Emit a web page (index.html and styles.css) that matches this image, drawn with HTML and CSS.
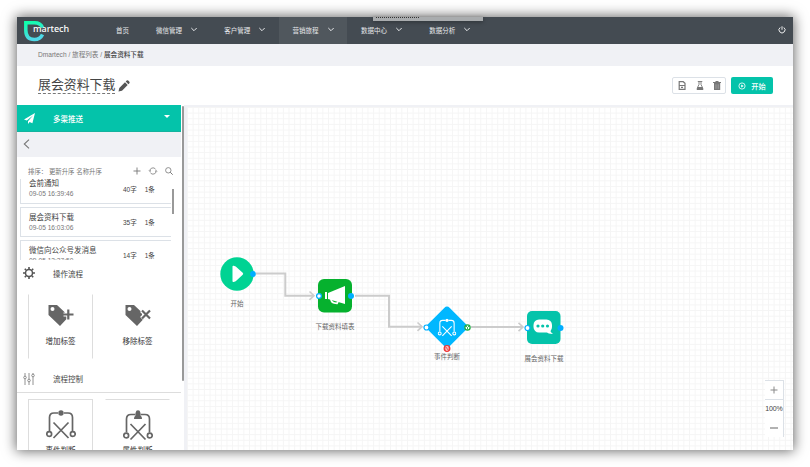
FILE: index.html
```html
<!DOCTYPE html>
<html lang="zh-CN">
<head>
<meta charset="utf-8">
<title>Dmartech</title>
<link rel="stylesheet" href="styles.css">
</head>
<body>
<svg class="defs" width="0" height="0">
  <symbol id="chev" viewBox="0 0 6 5"><path d="M.3 1 3 3.700 5.700 1" fill="none" stroke="currentColor" stroke-width="1"/></symbol>
  <symbol id="journey" viewBox="0 0 30 29"><g fill="none" stroke="currentColor" stroke-width="1.700"><path d="M3.500 21V7.500q0-4.500 4.500-4.500h4M18 3h4q4.500 0 4.500 4.500V21M7.500 12.500l15 15.500M22.500 12.500 7.500 28"/><circle cx="3.200" cy="24" r="2.400"/><circle cx="26.800" cy="24" r="2.400"/></g><circle cx="15" cy="3" r="2.700" fill="currentColor"/></symbol>
  <symbol id="tag" viewBox="0 0 26 22"><path fill="currentColor" d="M.5 0H9l8 7.500v3h2v3L12 21 .5 10z"/><circle cx="4.500" cy="4" r="2" fill="#fff"/></symbol>
</svg>
<div class="window">
  <header class="nav">
    <svg class="logo" viewBox="0 0 22 22"><defs><linearGradient id="lg" x1="0" y1="0" x2="0.300" y2="1"><stop offset="0" stop-color="#0fffab"/><stop offset="1" stop-color="#4fd8e8"/></linearGradient></defs><path d="M18.500 7.500Q16.500 2.700 10.500 2.700H1.800V10q0 9.500 8.500 9.500 6 0 8.200-5" fill="none" stroke="url(#lg)" stroke-width="3.500"/></svg>
    <span class="brand">martech</span>
    <nav class="menu">
      <a class="home">首页</a>
      <a>微信管理<svg><use href="#chev"/></svg></a>
      <a>客户管理<svg><use href="#chev"/></svg></a>
      <a class="active">营销旅程<svg><use href="#chev"/></svg></a>
      <a>数据中心<svg><use href="#chev"/></svg></a>
      <a>数据分析<svg><use href="#chev"/></svg></a>
    </nav>
    <svg class="power" viewBox="0 0 8 8"><path d="M2.200 1.500a3 3 0 1 0 3.600 0M4 .3v3.500" fill="none" stroke="#fff" stroke-width=".9"/></svg>
    <div class="tip"><i></i></div>
  </header>
  <div class="crumbs">Dmartech / 旅程列表 / <b>展会资料下载</b></div>
  <section class="titlebar">
    <h1>展会资料下载</h1>
    <svg class="pencil" viewBox="0 0 12 12"><path fill="#555" d="M.5 11.500 1.300 8 7 2.300 9.700 5 4 10.700zM7.700 1.600l1-1q.8-.6 1.500 0L11.400 1.800q.6.800 0 1.500l-1 1z"/></svg>
    <div class="tools">
      <svg viewBox="0 0 8 9"><path d="M1.200.7h4L7 2.300v6H1.200zM1.200 4.500H7M3 6.300h2" fill="none" stroke="#777" stroke-width="1.200"/></svg>
      <svg viewBox="0 0 8 9"><path d="M1.800.5h4.500M3 .5v3L1 7.500h6L5 3.500v-3" fill="none" stroke="#777" stroke-width=".9"/><path d="M2 6h4l1.500 3h-7z" fill="#777"/></svg>
      <svg viewBox="0 0 8 9"><path d="M0 1.500h8M2.500.5h3" stroke="#777" stroke-width="1.200"/><path d="M1 2h6.200v7H1z" fill="#777"/><path d="M3 3.300v4.500M5.200 3.300v4.500" stroke="#bbb" stroke-width=".6"/></svg>
    </div>
    <button class="start"><svg viewBox="0 0 8 8"><circle cx="4" cy="4" r="3.100" fill="none" stroke="#fff" stroke-width=".8"/><path d="M3.200 2.500 5.700 4 3.200 5.500z" fill="#fff"/></svg>开始</button>
  </section>
  <main class="work">
    <aside class="side">
      <div class="push"><svg viewBox="0 0 11 11"><path fill="#fff" d="M11 0 0 6.500l2.800 1L9 2.500 4 8.300V11l1.600-2 2.800 1.200z"/></svg><span>多渠推送</span><i class="caret"></i></div>
      <div class="back"><svg viewBox="0 0 7 10"><path d="M6 .7 1.300 5 6 9.300" fill="none" stroke="#777" stroke-width="1.100"/></svg></div>
      <div class="sort"><span>排序： 更新升序 名称升序</span>
        <svg class="s1" viewBox="0 0 8 8"><path d="M4 .5v7M.5 4h7" stroke="#777" stroke-width=".9"/></svg>
        <svg class="s2" viewBox="0 0 8 8"><path d="M.8 4.300A3.200 3.200 0 0 1 6.600 2.200M7.200 3.700A3.200 3.200 0 0 1 1.400 5.800M0 3.500l.9 1 1-.9M6.200 4.400l1-.9.800 1" fill="none" stroke="#777" stroke-width=".8"/></svg>
        <svg class="s3" viewBox="0 0 8 8"><circle cx="3.300" cy="3.300" r="2.700" fill="none" stroke="#777" stroke-width=".8"/><path d="m5.200 5.200 2.500 2.500" stroke="#777"/></svg>
      </div>
      <div class="list">
        <div class="item first"><div><b>会前通知</b><small>09-05 16:39:46</small></div><span>40字</span><span class="n">1条</span></div>
        <div class="item"><div><b>展会资料下载</b><small>09-05 16:03:06</small></div><span>35字</span><span class="n">1条</span></div>
        <div class="item last"><div><b>微信向公众号发消息</b><small>09-05 13:27:50</small></div><span>14字</span><span class="n">1条</span></div>
        <i class="thumb"></i>
      </div>
      <div class="head ops"><svg viewBox="0 0 12 12"><circle cx="6" cy="6" r="3.500" fill="none" stroke="#555" stroke-width="1.500"/><path d="M6 0v2M6 10v2M0 6h2M10 6h2M1.800 1.800l1.300 1.300M8.900 8.900l1.300 1.300M1.800 10.200l1.300-1.300M8.900 3.100l1.300-1.300" stroke="#555" stroke-width="1.600"/></svg><span>操作流程</span></div>
      <div class="cards tags">
        <div class="card sides"><svg viewBox="0 0 26 22"><use href="#tag" width="26" height="22"/><path d="M20.300 4.500v10M15.500 9.500h10" stroke="#fff" stroke-width="4"/><path d="M20.300 4.500v10M15 9.500h10.500" stroke="#666" stroke-width="2.200"/></svg><span>增加标签</span></div>
        <div class="card"><svg viewBox="0 0 26 22"><use href="#tag" width="26" height="22"/><path d="m16.500 5.500 8 8M24.500 5.500l-8 8" stroke="#fff" stroke-width="4"/><path d="m17 5.500 8 8M25 5.500l-8 8" stroke="#666" stroke-width="2.200"/></svg><span>移除标签</span></div>
      </div>
      <div class="head ctl"><svg viewBox="0 0 12 12"><path d="M2 0v3M2 6v6M6 0v6M6 9v3M10 0v1M10 4v8" stroke="#777" stroke-width=".8"/><g fill="none" stroke="#777" stroke-width=".8"><circle cx="2" cy="4.500" r="1.300"/><circle cx="6" cy="7.500" r="1.300"/><circle cx="10" cy="2.500" r="1.300"/></g></svg><span>流程控制</span></div>
      <div class="cards flow">
        <div class="card full"><svg class="j" viewBox="0 0 30 29"><use href="#journey" width="30" height="29"/></svg><span>事件判断</span></div>
        <div class="card top"><svg class="j" viewBox="0 0 30 29"><use href="#journey" y="1.500" width="30" height="29"/><circle cx="15" cy="2.500" r="2.200" fill="#666"/><path d="M11 9q0-4 4-4t4 4z" fill="#666"/></svg><span>属性判断</span></div>
      </div>
    </aside>
    <div class="gutter"><i></i></div>
    <div class="canvas">
      <svg class="wires" width="606" height="343" viewBox="187 107 606 343"><g fill="none" stroke="#ccc" stroke-width="2"><path d="M256 273.500h29.300v22.200H314M355 295.700h34v31H422M471 327h51"/><path d="m309.500 291.500 4.500 4.200-4.500 4.200M417.500 322.500l4.500 4.200-4.500 4.200M518.500 322.800l4.500 4.200-4.500 4.200" stroke-width="1.600"/></g></svg>
      <div class="node begin"><svg viewBox="0 0 34 34"><circle cx="17" cy="17" r="16.700" fill="#00d393"/><path d="M12.500 9.500q0-1 1.200-.8l2 .8 7 6.300q1 1 0 2l-7 6.400-2 .8q-1.200.2-1.200-.8z" fill="#fff"/><circle cx="33" cy="17" r="2.900" fill="#00aeff"/></svg><span>开始</span></div>
      <div class="node form"><svg viewBox="0 0 34 34"><rect width="34" height="33.500" rx="6" fill="#06b12e"/><path fill="#fff" d="M7 13h2v7H7zM10 14l17-7v18l-17-5z"/><path d="M13 20q0 4.300 6 4.300l1-2" fill="none" stroke="#fff" stroke-width="1.800"/><circle cx="1" cy="17" r="2.400" fill="#fff" stroke="#00aeff" stroke-width="1.300"/><circle cx="33" cy="17" r="3" fill="#00aeff"/></svg><span>下载资料填表</span></div>
      <div class="node judge"><svg viewBox="0 0 42 42"><rect x="5.500" y="5.500" width="31" height="31" rx="4" transform="rotate(45 21 21)" fill="#00b7ff"/><g color="#fff"><use href="#journey" x="11.500" y="12.500" width="19" height="18"/></g><circle cx="0.500" cy="21.500" r="2.500" fill="#fff" stroke="#00aeff" stroke-width="1.200"/><circle cx="41.500" cy="21.500" r="2.600" fill="#fff" stroke="#1aac43" stroke-width="1.300"/><path d="m40 20 1.500 1.500L43 20M41.500 21.500v2" fill="none" stroke="#1aac43" stroke-width=".9"/><circle cx="21" cy="42.500" r="2.800" fill="#fff" stroke="#e33" stroke-width="1.300"/><path d="M19.900 44v-3l2.200 3v-3" fill="none" stroke="#e33" stroke-width=".8"/></svg><span>事件判断</span></div>
      <div class="node msg"><svg viewBox="0 0 34 34"><rect width="33.500" height="33" rx="5" fill="#04c3aa"/><rect x="6.500" y="8.500" width="18.500" height="13" rx="5.500" fill="#fff"/><path d="M19 20.500q2 2.500 7 2.500-3-2-3-5z" fill="#fff"/><g fill="#04c3aa"><circle cx="11" cy="15" r="1.600"/><circle cx="15.700" cy="15" r="1.600"/><circle cx="20.500" cy="15" r="1.600"/></g><circle cx=".5" cy="17" r="2.500" fill="#fff" stroke="#00aeff" stroke-width="1.200"/><circle cx="33.500" cy="17" r="3" fill="#00aeff"/></svg><span>展会资料下载</span></div>
      <div class="zoom"><div class="plus"><svg viewBox="0 0 8 8"><path d="M4 .5v7M.5 4h7" stroke="#888"/></svg></div><span>100%</span><div><svg viewBox="0 0 8 8"><path d="M0 4h8" stroke="#888" stroke-width="1.300"/></svg></div></div>
    </div>
  </main>
</div>
</body>
</html>
```
FILE: styles.css
```css
* { box-sizing: border-box; }
body { margin: 0; width: 810px; height: 467px; padding: 17px; overflow: hidden; background: #fff; color: #444; font-family: "Liberation Sans", "Noto Sans CJK SC", sans-serif; font-size: 7px; }
svg { display: block; flex: none; overflow: visible; }
.defs { position: absolute; }
.window { width: 776px; height: 433px; background: #fff; box-shadow: 0 0 12px 1px rgba(0,0,0,.6); clip-path: inset(-17px); display: flex; flex-direction: column; }
.nav { height: 27px; flex: none; background: #444b52; display: flex; align-items: center; position: relative; color: #fff; }
.logo { width: 22px; height: 22px; margin-left: 7px; }
.brand { font: 500 9px/12px "Noto Sans", sans-serif; margin: -3px 0 0 -13px; width: 47px; position: relative; }
.menu { display: flex; height: 27px; margin-left: 22px; }
.menu a { width: 68.3px; padding-left: 14px; display: flex; align-items: center; font-size: 6.5px; padding-bottom: 2px; color: #e6e8ea; white-space: nowrap; }
.menu .home { width: 40px; }
.menu svg { width: 6px; height: 5px; margin-left: 9px; }
.menu .active { background: #50575d; }
.power { width: 8px; height: 8px; margin: -2px 7px 0 auto; }
.tip { position: absolute; left: 356px; top: 0; width: 110px; height: 4px; background: #a9acae; box-shadow: 0 1px 4px rgba(0,0,0,.35); }
.tip i { display: block; width: 43px; margin-left: 3px; border-top: 1px dotted #333; }
.crumbs { height: 22px; flex: none; background: #f0f1f5; padding-left: 21px; line-height: 21px; font-size: 6.6px; color: #777; }
.crumbs b { color: #444; font-weight: 500; }
.titlebar { height: 39px; flex: none; display: flex; align-items: center; padding: 0 20px 0 21px; }
h1 { margin: -2px 0 0; font-size: 12.9px; font-weight: 400; line-height: 17px; border-bottom: 1px dashed #777; width: 77px; white-space: nowrap; height: 18px; }
.pencil { width: 12px; height: 12px; margin-left: 3px; }
.tools { margin-left: auto; width: 54px; height: 17px; border: 1px solid #dce1e7; border-radius: 2px; display: flex; align-items: center; justify-content: space-between; padding: 0 4px 0 5px; }
.tools svg { width: 8px; height: 9px; }
.start { width: 42px; height: 17px; margin: 0 0 0 5px; border: 0; border-radius: 2px; background: #04c3aa; color: #fff; display: flex; align-items: center; justify-content: center; gap: 5px; font: 500 7.2px "Noto Sans CJK SC", sans-serif; padding: 0; }
.start svg { width: 8px; height: 8px; }
.work { display: flex; height: 345px; overflow: hidden; }
.side { width: 164px; height: 345px; overflow: hidden; flex: none; }
.push { height: 27px; background: #04c3aa; color: #fff; display: flex; align-items: center; padding: 0 11px 0 7px; font-size: 7.5px; font-weight: 500; border-bottom: 1px solid #14b39e; }
.push svg { width: 11px; height: 11px; }
.push span { margin-left: 18px; flex: 1; }
.caret { border: 3px solid transparent; border-top: 3px solid #fff; border-bottom: 0; margin-top: -3px; }
.back { height: 25px; background: #f0f1f5; padding: 7px 0 0 6px; }
.back svg { width: 7px; height: 10px; }
.sort { height: 22px; display: flex; align-items: center; font-size: 6.4px; color: #777; padding: 6px 8px 0 11px; }
.sort span { width: 105px; white-space: nowrap; }
.sort svg { width: 8px; height: 8px; }
.sort .s2, .sort .s3 { margin-left: 8px; }
.list { height: 81px; overflow: hidden; position: relative; padding-left: 3px; }
.item { height: 30px; width: 151px; border: 1px solid #dce1e7; border-right: 0; margin-bottom: 3px; display: flex; align-items: center; padding-left: 8px; font-size: 6.5px; }
.item div { width: 94px; }
.item b { display: block; font-weight: 400; font-size: 7.5px; line-height: 11px; white-space: nowrap; }
.item small { display: block; font-size: 6.6px; line-height: 10px; color: #777; }
.item .n { margin-left: 8px; }
.item.first { margin-top: -5px; border-top: 0; }
.thumb { position: absolute; left: 155px; top: 10px; width: 2px; height: 25px; background: #999; }
.head { display: flex; align-items: center; padding-left: 6px; font-size: 7.5px; }
.head svg { width: 12px; height: 12px; }
.head span { margin-left: 18px; }
.ops { height: 26px; }
.ctl { height: 28px; border-bottom: 1px solid #ddd; }
.cards { display: flex; gap: 12px; padding-left: 11px; color: #666; }
.tags { padding-top: 8px; height: 79px; }
.card { width: 65px; height: 65px; display: flex; flex-direction: column; align-items: center; padding-top: 10px; border: 1px solid transparent; }
.card svg { width: 26px; height: 22px; }
.card span { font-size: 7.5px; margin-top: 9px; line-height: 11px; color: #333; }
.sides { border-left-color: #ddd; border-right-color: #ddd; }
.flow { padding-top: 6px; }
.full { border-color: #ddd; }
.top { border-top-color: #ddd; }
.flow .card { padding-top: 10px; height: 80px; }
.card .j { width: 30px; height: 29px; }
.flow .card span { margin-top: 6px; }
.gutter { width: 6px; flex: none; border-right: 3px solid #f0f1f5; }
.gutter i { display: block; width: 2px; height: 275px; margin: 1px 0 0 1px; background: #999; border-radius: 1px; }
.canvas { flex: 1; border-top: 2px solid #f0f1f5; position: relative; background-image: linear-gradient(90deg, #f5f5f5 1px, transparent 1px), linear-gradient(#f5f5f5 1px, transparent 1px); background-size: 5.65px 5.65px; }
.wires { position: absolute; left: 0; top: 0; }
.node { position: absolute; width: 60px; display: flex; flex-direction: column; align-items: center; font-size: 6.5px; color: #666; white-space: nowrap; }
.node svg { width: 34px; height: 34px; }
.node span { line-height: 10px; margin-top: 9px; }
.begin { left: 20px; top: 149.5px; }
.begin span { margin-top: 8px; }
.form { left: 118px; top: 172px; }
.judge { left: 230px; top: 198.5px; }
.judge svg { width: 42px; height: 42px; }
.judge span { margin-top: 4px; }
.msg { left: 327px; top: 204px; }
.zoom { position: absolute; left: 578px; top: 273px; width: 19px; height: 57px; background: #fff; border: 1px solid #dce1e7; border-left: 0; border-bottom: 0; display: flex; flex-direction: column; }
.zoom div { height: 19px; display: flex; align-items: center; justify-content: center; }
.zoom svg { width: 8px; height: 8px; }
.zoom .plus { border-bottom: 1px solid #dce1e7; }
.zoom span { height: 19px; line-height: 18px; font-size: 7px; text-align: center; letter-spacing: -.1px; }
```
